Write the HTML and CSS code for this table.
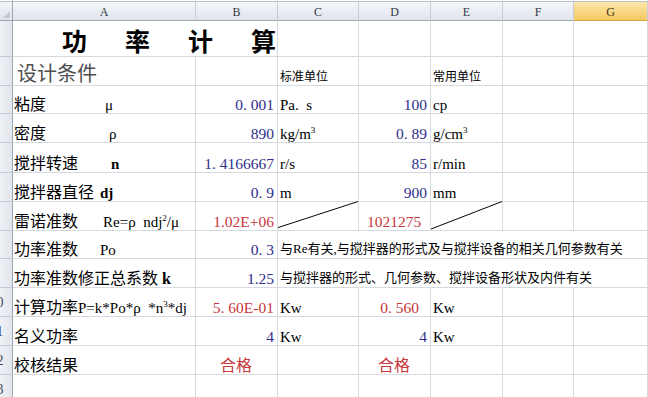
FILE: index.html
```html
<!DOCTYPE html>
<html lang="zh">
<head>
<meta charset="utf-8">
<title>功率计算</title>
<link rel="stylesheet" href="styles.css">
</head>
<body>
<div class="sheet">
  <div class="corner"><span class="tri"></span></div>
  <div class="ch">A</div><div class="ch">B</div><div class="ch">C</div><div class="ch">D</div><div class="ch">E</div><div class="ch">F</div><div class="ch sel">G</div>

  <div class="rh"><span>1</span></div>
  <div class="c title span2">功率计算</div>
  <div class="c"></div><div class="c"></div><div class="c"></div><div class="c"></div><div class="c"></div>

  <div class="rh"><span>2</span></div>
  <div class="c sub">设计条件</div>
  <div class="c"></div>
  <div class="c small">标准单位</div>
  <div class="c"></div>
  <div class="c small">常用单位</div>
  <div class="c"></div><div class="c"></div>

  <div class="rh"><span>3</span></div>
  <div class="c lab"><span class="lb">粘度</span><span class="sy s5">μ</span></div>
  <div class="c r sn blue"><span>0<span class="pt">.</span>001</span></div>
  <div class="c u"><span>Pa.&ensp;s</span></div>
  <div class="c r tn blue">100</div>
  <div class="c u"><span>cp</span></div>
  <div class="c"></div><div class="c"></div>

  <div class="rh"><span>4</span></div>
  <div class="c lab"><span class="lb">密度</span><span class="sy s9">ρ</span></div>
  <div class="c r tn blue">890</div>
  <div class="c u"><span>kg/m<sup>3</sup></span></div>
  <div class="c r sn blue"><span>0<span class="pt">.</span>89</span></div>
  <div class="c u"><span>g/cm<sup>3</sup></span></div>
  <div class="c"></div><div class="c"></div>

  <div class="rh"><span>5</span></div>
  <div class="c lab"><span class="lb">搅拌转速</span><span class="sy s11 bd">n</span></div>
  <div class="c r sn blue"><span>1<span class="pt">.</span>4166667</span></div>
  <div class="c u"><span>r/s</span></div>
  <div class="c r tn blue">85</div>
  <div class="c u"><span>r/min</span></div>
  <div class="c"></div><div class="c"></div>

  <div class="rh"><span>6</span></div>
  <div class="c lab"><span class="lb">搅拌器直径</span><span class="sy bd">dj</span></div>
  <div class="c r sn blue"><span>0<span class="pt">.</span>9</span></div>
  <div class="c u"><span>m</span></div>
  <div class="c r tn blue">900</div>
  <div class="c u"><span>mm</span></div>
  <div class="c"></div><div class="c"></div>

  <div class="rh"><span>7</span></div>
  <div class="c lab"><span class="lb">雷诺准数</span><span class="sy s3">Re=<span class="gk">ρ</span>ndj<sup>2</sup>/μ</span></div>
  <div class="c r tn red">1.02E+06</div>
  <div class="c diag"><svg viewBox="0 0 81 29" preserveAspectRatio="none"><line x1="0" y1="26.5" x2="81" y2="-0.5"/></svg></div>
  <div class="c ctr tn red">1021275</div>
  <div class="c diag"><svg viewBox="0 0 72 29" preserveAspectRatio="none"><line x1="0" y1="28" x2="72" y2="-0.5"/></svg></div>
  <div class="c"></div><div class="c"></div>

  <div class="rh"><span>8</span></div>
  <div class="c lab"><span class="lb">功率准数</span><span class="sy">Po</span></div>
  <div class="c r sn blue"><span>0<span class="pt">.</span>3</span></div>
  <div class="c note ov">与Re有关,与搅拌器的形式及与搅拌设备的相关几何参数有关</div>
  <div class="c ov"></div><div class="c ov"></div><div class="c ov"></div><div class="c"></div>

  <div class="rh"><span>9</span></div>
  <div class="c lab"><span>功率准数修正总系数&nbsp;<b>k</b></span></div>
  <div class="c r tn blue">1.25</div>
  <div class="c note ov">与搅拌器的形式、几何参数、搅拌设备形状及内件有关</div>
  <div class="c ov"></div><div class="c ov"></div><div class="c ov"></div><div class="c"></div>

  <div class="rh"><span>10</span></div>
  <div class="c lab"><span>计算功率<span class="fm">P=k*Po*<span class="gk">ρ</span>*n<sup>3</sup>*dj</span></span></div>
  <div class="c r sn red"><span>5<span class="pt">.</span>60E-01</span></div>
  <div class="c u"><span>Kw</span></div>
  <div class="c r sn red pr"><span>0<span class="pt">.</span>560</span></div>
  <div class="c u"><span>Kw</span></div>
  <div class="c"></div><div class="c"></div>

  <div class="rh"><span>11</span></div>
  <div class="c lab">名义功率</div>
  <div class="c r tn blue">4</div>
  <div class="c u"><span>Kw</span></div>
  <div class="c r tn blue">4</div>
  <div class="c u"><span>Kw</span></div>
  <div class="c"></div><div class="c"></div>

  <div class="rh"><span>12</span></div>
  <div class="c lab">校核结果</div>
  <div class="c ctr red ok">合格</div>
  <div class="c"></div>
  <div class="c ctr red ok">合格</div>
  <div class="c"></div>
  <div class="c"></div><div class="c"></div>

  <div class="rh"><span>13</span></div>
  <div class="c"></div><div class="c"></div><div class="c"></div><div class="c"></div><div class="c"></div><div class="c"></div><div class="c"></div>
</div>
</body>
</html>
```

FILE: styles.css
```css
* { box-sizing: border-box; margin: 0; padding: 0; }
html, body { background: #fff; }
body {
  width: 648px;
  height: 397px;
  overflow: hidden;
  font-family: "Liberation Serif", "Noto Sans CJK SC", serif;
  color: #000;
}
.sheet {
  display: grid;
  grid-template-columns: 13px 183px 82px 81px 72px 72px 71px 74px;
  grid-template-rows: 21px 36px 29px 28px 29px 30px 29px 29px 28px 29px 29px 29px 29px 29px;
  width: 648px;
  height: 397px;
  overflow: hidden;
}
.corner {
  position: relative;
  background: linear-gradient(#f4f6f9, #dfe3ea);
  border-top: 1px solid #fff;
  box-shadow: inset 0 1px #b7bdc7;
  border-right: 1px solid #9ea7b4;
  border-bottom: 1px solid #9ea7b4;
}
.tri {
  position: absolute;
  right: 2px;
  bottom: 2px;
  width: 0;
  height: 0;
  border-left: 7px solid transparent;
  border-bottom: 7px solid #c3c9d2;
}
.ch {
  display: flex;
  align-items: center;
  justify-content: center;
  background: linear-gradient(#f5f7fa, #e0e4eb);
  border-top: 1px solid #fff;
  box-shadow: inset 0 1px #b7bdc7;
  border-right: 1px solid #c8cdd5;
  border-bottom: 1px solid #9ea7b4;
  font-size: 12px;
  color: #2f3a4a;
  padding-top: 3px;
}
.ch.sel {
  background: linear-gradient(#fde9ae, #f5c962);
  border-bottom-color: #d9a441;
  color: #3a3320;
}
.rh {
  display: flex;
  align-items: center;
  overflow: hidden;
  background: linear-gradient(90deg, #eef1f5, #e2e6ed);
  border-right: 1px solid #9ea7b4;
  border-bottom: 1px solid #c8cdd5;
  font-size: 14px;
  color: #3f4a5a;
}
.rh span {
  flex: none;
  width: 30px;
  margin-left: -18.5px;
  text-align: center;
  padding-top: 2px;
}
.c {
  display: flex;
  align-items: flex-end;
  min-width: 0;
  white-space: nowrap;
  border-right: 1px solid #d6d9de;
  border-bottom: 1px solid #d6d9de;
  padding: 0 3px 0 2px;
  font-size: 16px;
  line-height: 16px;
}
.span2 { grid-column: span 2; }
.c.ov { border-right-color: transparent; }
.r { justify-content: flex-end; }
.ctr { justify-content: center; }
.pr { padding-right: 11px; }
.title {
  align-items: center;
  padding: 3px 0 0 49px;
  font-size: 25px;
  line-height: 30px;
  font-weight: bold;
  letter-spacing: 38px;
  font-family: "Noto Sans CJK SC", sans-serif;
}
.sub {
  padding-left: 4px;
  font-size: 20px;
  line-height: 22px;
  color: #4f4f4f;
}
.small { font-size: 12px; }
.note { font-size: 13px; padding-bottom: 1px; }
.lab { padding-left: 1px; }
.lb { flex: none; width: 86px; }
.sy { font-size: 15px; }
.fm { font-size: 15px; }
.s3 { margin-left: 3px; }
.s5 { margin-left: 5px; }
.s9 { margin-left: 9px; }
.s11 { margin-left: 11px; }
.bd, b { font-weight: bold; }
.gk { display: inline-block; width: 1em; text-align: left; }
.u { font-size: 15px; }
.tn { font-size: 15.5px; }
.sn { font-size: 15.5px; }
.pt { display: inline-block; width: 0.5em; text-align: left; }
.blue { color: #2e2e8c; }
.red { color: #c8373c; }
.ok { font-size: 16px; }
sup {
  font-size: 0.6em;
  line-height: 0;
  vertical-align: 0.65em;
}
.diag { position: relative; }
.diag svg {
  position: absolute;
  left: 0;
  top: 0;
  width: 100%;
  height: 100%;
  overflow: visible;
}
.diag line { stroke: #000; stroke-width: 1; }
```
